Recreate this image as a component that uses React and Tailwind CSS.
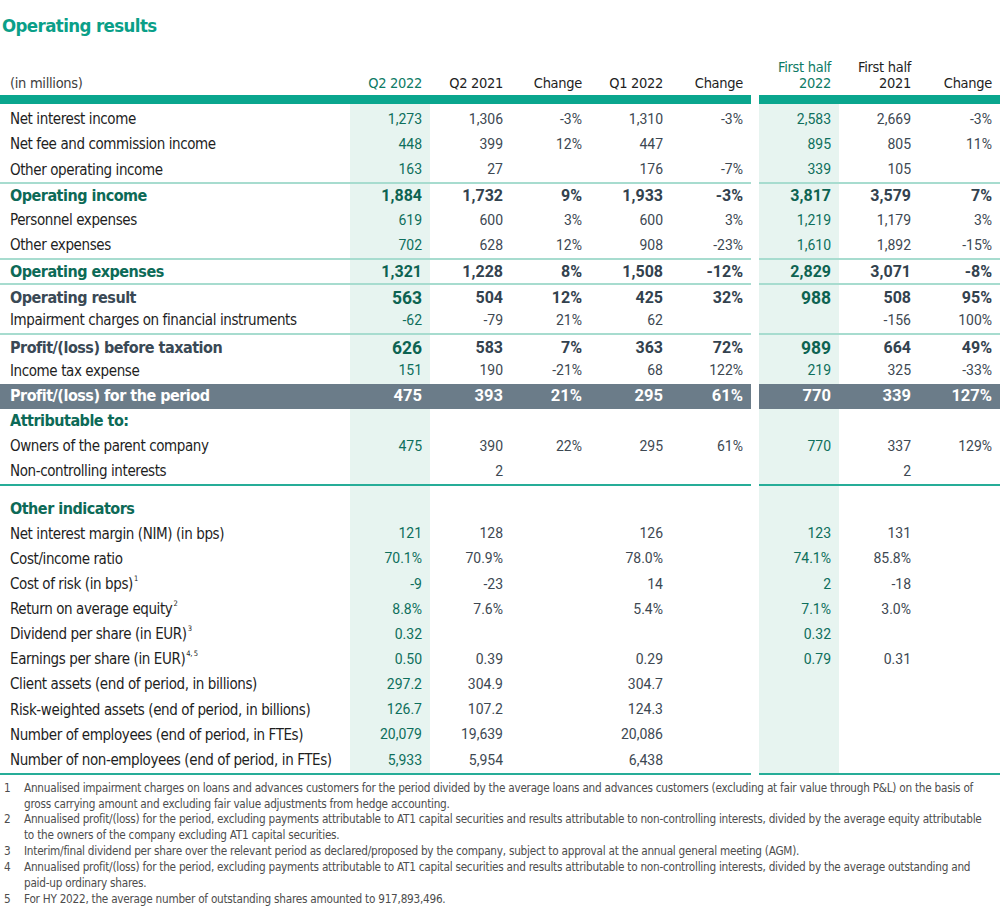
import React from "react";

const LABEL_FONT = "[font-family:'DejaVu_Sans_Condensed','DejaVu_Sans',sans-serif]";
const NUM_FONT = "[font-family:Roboto,'Liberation_Sans',sans-serif]";

const GRID = "grid grid-cols-[350px_80px_81px_79px_81px_80px_8px_80px_80px_81px]";

const results = [
  { label: "Net interest income", v: ["1,273", "1,306", "-3%", "1,310", "-3%", "2,583", "2,669", "-3%"] },
  { label: "Net fee and commission income", v: ["448", "399", "12%", "447", "", "895", "805", "11%"] },
  { label: "Other operating income", v: ["163", "27", "", "176", "-7%", "339", "105", ""] },
  { label: "Operating income", type: "total", line: true, v: ["1,884", "1,732", "9%", "1,933", "-3%", "3,817", "3,579", "7%"] },
  { label: "Personnel expenses", v: ["619", "600", "3%", "600", "3%", "1,219", "1,179", "3%"] },
  { label: "Other expenses", v: ["702", "628", "12%", "908", "-23%", "1,610", "1,892", "-15%"] },
  { label: "Operating expenses", type: "total", line: true, v: ["1,321", "1,228", "8%", "1,508", "-12%", "2,829", "3,071", "-8%"] },
  { label: "Operating result", type: "result", line: true, v: ["563", "504", "12%", "425", "32%", "988", "508", "95%"] },
  { label: "Impairment charges on financial instruments", v: ["-62", "-79", "21%", "62", "", "", "-156", "100%"] },
  { label: "Profit/(loss) before taxation", type: "result", line: true, v: ["626", "583", "7%", "363", "72%", "989", "664", "49%"] },
  { label: "Income tax expense", v: ["151", "190", "-21%", "68", "122%", "219", "325", "-33%"] },
  { label: "Profit/(loss) for the period", type: "dark", v: ["475", "393", "21%", "295", "61%", "770", "339", "127%"] },
  { label: "Attributable to:", type: "heading", v: [] },
  { label: "Owners of the parent company", v: ["475", "390", "22%", "295", "61%", "770", "337", "129%"] },
  { label: "Non-controlling interests", v: ["", "2", "", "", "", "", "2", ""] },
];

const indicators = [
  { label: "Other indicators", type: "heading", v: [] },
  { label: "Net interest margin (NIM) (in bps)", v: ["121", "128", "", "126", "", "123", "131", ""] },
  { label: "Cost/income ratio", v: ["70.1%", "70.9%", "", "78.0%", "", "74.1%", "85.8%", ""] },
  { label: "Cost of risk (in bps)", sup: "1", v: ["-9", "-23", "", "14", "", "2", "-18", ""] },
  { label: "Return on average equity", sup: "2", v: ["8.8%", "7.6%", "", "5.4%", "", "7.1%", "3.0%", ""] },
  { label: "Dividend per share (in EUR)", sup: "3", v: ["0.32", "", "", "", "", "0.32", "", ""] },
  { label: "Earnings per share (in EUR)", sup: "4, 5", v: ["0.50", "0.39", "", "0.29", "", "0.79", "0.31", ""] },
  { label: "Client assets (end of period, in billions)", v: ["297.2", "304.9", "", "304.7", "", "", "", ""] },
  { label: "Risk-weighted assets (end of period, in billions)", v: ["126.7", "107.2", "", "124.3", "", "", "", ""] },
  { label: "Number of employees (end of period, in FTEs)", v: ["20,079", "19,639", "", "20,086", "", "", "", ""] },
  { label: "Number of non-employees (end of period, in FTEs)", v: ["5,933", "5,954", "", "6,438", "", "", "", ""] },
];

const footnotes = [
  [
    "Annualised impairment charges on loans and advances customers for the period divided by the average loans and advances customers (excluding at fair value through P&L) on the basis of",
    "gross carrying amount and excluding fair value adjustments from hedge accounting.",
  ],
  [
    "Annualised profit/(loss) for the period, excluding payments attributable to AT1 capital securities and results attributable to non-controlling interests, divided by the average equity attributable",
    "to the owners of the company excluding AT1 capital securities.",
  ],
  [
    "Interim/final dividend per share over the relevant period as declared/proposed by the company, subject to approval at the annual general meeting (AGM).",
  ],
  [
    "Annualised profit/(loss) for the period, excluding payments attributable to AT1 capital securities and results attributable to non-controlling interests, divided by the average outstanding and",
    "paid-up ordinary shares.",
  ],
  ["For HY 2022, the average number of outstanding shares amounted to 917,893,496."],
];

const isHi = (i) => i === 1 || i === 7;
const valueAt = (v, i) => (i >= 1 && i <= 5 ? v[i - 1] : i >= 7 ? v[i - 2] : "");

function labelClass(type) {
  if (type === "total") return "text-[16px] tracking-[-0.5px] font-bold text-[#0d6a57]";
  if (type === "result") return "text-[16px] tracking-[-0.5px] font-bold text-[#3a4955]";
  if (type === "dark") return "text-[16px] tracking-[-0.5px] font-bold text-white";
  if (type === "heading") return "text-[16px] tracking-[-0.5px] font-bold text-[#0d6a57]";
  return "text-[15px] tracking-[-0.4px] text-[#1e1e1e]";
}

function numClass(type, hi) {
  if (type === "dark") return "text-[16.5px] font-bold text-white";
  if (type === "result") return hi ? "text-[17.5px] font-bold text-[#0d6352]" : "text-[16px] font-bold text-[#33424e]";
  if (type === "total") return hi ? "text-[16px] font-bold text-[#0d6352]" : "text-[16px] font-bold text-[#33424e]";
  return hi ? "text-[14px] text-[#0e6f5c]" : "text-[14px] text-[#3d4852]";
}

function Row({ row }) {
  const { type, line } = row;
  return (
    <div className={`${GRID} h-[25.15px]`}>
      {Array.from({ length: 10 }).map((_, i) => {
        if (i === 6) return <div key={i} />;
        let bg = isHi(i) ? "bg-[#e7f4f0]" : "";
        if (type === "dark") bg = "bg-[#6b7c89]";
        const border = line ? "border-t-2 border-[#a7dccf]" : "";
        if (i === 0) {
          return (
            <div key={i} className={`${bg} ${border} flex items-center pl-[10px] whitespace-nowrap ${LABEL_FONT} ${labelClass(type)}`}>
              {row.label}
              {row.sup && <sup className="text-[7.5px] ml-[1px] top-[-0.7em]">{row.sup}</sup>}
            </div>
          );
        }
        return (
          <div key={i} className={`${bg} ${border} flex items-center justify-end pr-[8px] ${NUM_FONT} ${numClass(type, isHi(i))}`}>
            {valueAt(row.v, i)}
          </div>
        );
      })}
    </div>
  );
}

function Band({ h, fill }) {
  return (
    <div className={`${GRID} ${h}`}>
      {Array.from({ length: 10 }).map((_, i) => {
        if (i === 6) return <div key={i} />;
        if (fill) return <div key={i} className={fill} />;
        return <div key={i} className={isHi(i) ? "bg-[#e7f4f0]" : ""} />;
      })}
    </div>
  );
}

const headers = [
  { t: "(in millions)" },
  { t: "Q2 2022", hi: true },
  { t: "Q2 2021" },
  { t: "Change" },
  { t: "Q1 2022" },
  { t: "Change" },
  null,
  { t: "First half", t2: "2022", hi: true },
  { t: "First half", t2: "2021" },
  { t: "Change" },
];

export default function App() {
  return (
    <div className="w-[1000px] h-[924px] bg-white overflow-hidden">
      <h1 className={`pt-[14px] pl-[2px] h-[38px] text-[18.5px] tracking-[-0.6px] leading-[24px] font-bold text-[#0a9f88] ${LABEL_FONT}`}>
        Operating results
      </h1>

      {/* column headers */}
      <div className={`${GRID} h-[57px] items-end pb-[4px] text-[14.5px] tracking-[-0.3px] leading-[16px] ${LABEL_FONT}`}>
        {headers.map((h, i) => {
          if (!h) return <div key={i} />;
          if (i === 0) {
            return (
              <div key={i} className="pl-[10px] text-[#3d3d3d]">
                {h.t}
              </div>
            );
          }
          return (
            <div key={i} className={`text-right pr-[8px] ${h.hi ? "text-[#0d7a64]" : "text-[#1e1e1e]"}`}>
              {h.t}
              {h.t2 && <div>{h.t2}</div>}
            </div>
          );
        })}
      </div>
      <Band h="h-[9px]" fill="bg-[#0aa68e]" />
      <Band h="h-[3px]" />

      {results.map((r) => (
        <Row key={r.label} row={r} />
      ))}

      <Band h="h-[2px]" fill="bg-[#26ad98]" />
      <Band h="h-[10px]" />

      {indicators.map((r) => (
        <Row key={r.label} row={r} />
      ))}

      <Band h="h-[2px]" fill="bg-[#26ad98]" />

      {/* footnotes */}
      <div className={`mt-[6px] text-[11.7px] tracking-[-0.25px] leading-[15.9px] text-[#4d4d4d] ${LABEL_FONT}`}>
        {footnotes.map((lines, n) => (
          <div key={n} className="flex">
            <div className="w-[24px] pl-[4px] shrink-0">{n + 1}</div>
            <div className="whitespace-nowrap">
              {lines.map((l, k) => (
                <div key={k}>{l}</div>
              ))}
            </div>
          </div>
        ))}
      </div>
    </div>
  );
}
